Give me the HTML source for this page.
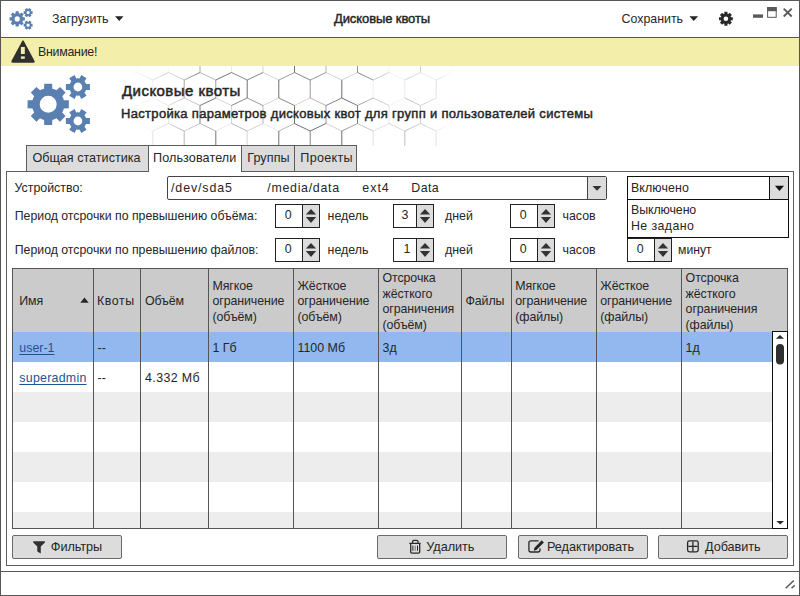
<!DOCTYPE html>
<html><head><meta charset="utf-8"><style>
html,body{margin:0;padding:0;width:800px;height:596px;overflow:hidden;background:#fff}
body{position:relative;font-family:'Liberation Sans', sans-serif;color:#262626}
</style></head><body>
<div style="position:absolute;left:0px;top:0px;width:800px;height:596px;box-sizing:border-box;border:1px solid #565656;background:#fff"></div>
<svg style="position:absolute;left:0;top:0" width="800" height="37">
<path fill="#5a7fb1" fill-rule="evenodd" d="M19.46,13.45L18.77,13.21L18.75,11.26L15.65,11.26L15.63,13.21L14.94,13.45L14.29,13.77L12.89,12.40L10.70,14.59L12.07,15.99L11.75,16.64L11.51,17.33L9.56,17.35L9.56,20.45L11.51,20.47L11.75,21.16L12.07,21.81L10.70,23.21L12.89,25.40L14.29,24.03L14.94,24.35L15.63,24.59L15.65,26.54L18.75,26.54L18.77,24.59L19.46,24.35L20.11,24.03L21.51,25.40L23.70,23.21L22.33,21.81L22.65,21.16L22.89,20.47L24.84,20.45L24.84,17.35L22.89,17.33L22.65,16.64L22.33,15.99L23.70,14.59L21.51,12.40L20.11,13.77ZM19.80,18.90A2.6,2.6 0 1,0 14.60,18.90A2.6,2.6 0 1,0 19.80,18.90Z"/>
<path fill="#5a7fb1" fill-rule="evenodd" d="M30.96,14.25L31.10,13.98L32.56,14.08L32.56,11.12L31.10,11.22L30.96,10.95L30.79,10.70L31.61,9.48L29.05,8.00L28.40,9.31L28.10,9.30L27.80,9.31L27.15,8.00L24.59,9.48L25.41,10.70L25.24,10.95L25.10,11.22L23.64,11.12L23.64,14.08L25.10,13.98L25.24,14.25L25.41,14.50L24.59,15.72L27.15,17.20L27.80,15.89L28.10,15.90L28.40,15.89L29.05,17.20L31.61,15.72L30.79,14.50ZM29.70,12.60A1.6,1.6 0 1,0 26.50,12.60A1.6,1.6 0 1,0 29.70,12.60Z"/>
<path fill="#5a7fb1" fill-rule="evenodd" d="M30.96,26.85L31.10,26.58L32.56,26.68L32.56,23.72L31.10,23.82L30.96,23.55L30.79,23.30L31.61,22.08L29.05,20.60L28.40,21.91L28.10,21.90L27.80,21.91L27.15,20.60L24.59,22.08L25.41,23.30L25.24,23.55L25.10,23.82L23.64,23.72L23.64,26.68L25.10,26.58L25.24,26.85L25.41,27.10L24.59,28.32L27.15,29.80L27.80,28.49L28.10,28.50L28.40,28.49L29.05,29.80L31.61,28.32L30.79,27.10ZM29.70,25.20A1.6,1.6 0 1,0 26.50,25.20A1.6,1.6 0 1,0 29.70,25.20Z"/>
<path fill="#262626" d="M115,16.3 L123.5,16.3 L119.25,21 Z"/>
<path fill="#262626" d="M689.4,16.3 L698.1,16.3 L693.75,21 Z"/>
<path fill="#2a2a2a" fill-rule="evenodd" d="M727.93,13.85L727.45,13.68L727.45,11.82L724.35,11.82L724.35,13.68L723.87,13.85L723.41,14.07L722.10,12.75L719.90,14.95L721.22,16.26L721.00,16.72L720.83,17.20L718.97,17.20L718.97,20.30L720.83,20.30L721.00,20.78L721.22,21.24L719.90,22.55L722.10,24.75L723.41,23.43L723.87,23.65L724.35,23.82L724.35,25.68L727.45,25.68L727.45,23.82L727.93,23.65L728.39,23.43L729.70,24.75L731.90,22.55L730.58,21.24L730.80,20.78L730.97,20.30L732.83,20.30L732.83,17.20L730.97,17.20L730.80,16.72L730.58,16.26L731.90,14.95L729.70,12.75L728.39,14.07ZM728.20,18.75A2.3,2.3 0 1,0 723.60,18.75A2.3,2.3 0 1,0 728.20,18.75Z"/>
<rect x="753" y="14.4" width="10" height="3.4" fill="#5a5a5a"/>
<rect x="767.6" y="7.6" width="8.6" height="9.7" fill="none" stroke="#5a5a5a" stroke-width="1"/>
<rect x="767.1" y="7.1" width="9.6" height="4.1" fill="#5a5a5a"/>
<path d="M783.7,8.7 L791.7,16.5 M791.7,8.7 L783.7,16.5" stroke="#5a5a5a" stroke-width="1.85"/>
</svg>
<div style="position:absolute;left:52px;top:8.5px;font-size:12.4px;line-height:20px;font-weight:normal;color:#262626;letter-spacing:0px;white-space:pre;">Загрузить</div>
<div style="position:absolute;left:334px;top:9px;font-size:13px;line-height:20px;font-weight:normal;color:#262626;letter-spacing:-0.1px;white-space:pre;-webkit-text-stroke:0.45px #262626">Дисковые квоты</div>
<div style="position:absolute;left:621.5px;top:8.5px;font-size:12.4px;line-height:20px;font-weight:normal;color:#262626;letter-spacing:0px;white-space:pre;">Сохранить</div>
<div style="position:absolute;left:0px;top:37px;width:800px;height:1px;box-sizing:border-box;background:#565656"></div>
<div style="position:absolute;left:1px;top:38px;width:798px;height:28px;box-sizing:border-box;background:#f3eea9"></div>
<svg style="position:absolute;left:0;top:38px" width="60" height="28">
<path d="M23,3.2 L33.6,23 Q34.5,24 33.2,24 L12.8,24 Q11.5,24 12.4,23 Z" fill="#303030" stroke="#303030" stroke-width="1.6" stroke-linejoin="round"/>
<rect x="20.9" y="9" width="3.9" height="7" fill="#f3eea9"/>
<rect x="20.9" y="18.4" width="3.9" height="2.4" fill="#f3eea9"/>
</svg>
<div style="position:absolute;left:37.9px;top:41.5px;font-size:12.4px;line-height:20px;font-weight:normal;color:#262626;letter-spacing:-0.25px;white-space:pre;">Внимание!</div>
<svg style="position:absolute;left:0;top:66px" width="800" height="80" viewBox="0 66 800 80">
<defs>
<linearGradient id="fg" gradientUnits="userSpaceOnUse" x1="0" x2="800" y1="0" y2="0">
<stop offset="0.1625" stop-color="#fff" stop-opacity="0"/>
<stop offset="0.2125" stop-color="#fff" stop-opacity="0.3"/>
<stop offset="0.256" stop-color="#fff" stop-opacity="0.85"/>
<stop offset="0.43" stop-color="#fff" stop-opacity="0.9"/>
<stop offset="0.4875" stop-color="#fff" stop-opacity="0.5"/>
<stop offset="0.55" stop-color="#fff" stop-opacity="0.15"/>
<stop offset="0.57" stop-color="#fff" stop-opacity="0"/>
</linearGradient>
<mask id="m"><rect x="0" y="66" width="800" height="80" fill="url(#fg)"/></mask>
</defs>
<g fill="none" stroke="#333" stroke-width="0.8" mask="url(#m)"><path d="M58.2,29.0L58.2,47.0" stroke-opacity="0.85"/><path d="M58.2,29.0L74.0,21.5" stroke-opacity="1"/><path d="M58.2,47.0L74.0,54.5" stroke-opacity="0.7"/><path d="M58.2,80.0L58.2,98.0" stroke-opacity="0.3"/><path d="M58.2,80.0L74.0,72.5" stroke-opacity="1"/><path d="M58.2,98.0L74.0,105.5" stroke-opacity="1"/><path d="M58.2,131.0L58.2,149.0" stroke-opacity="0.15"/><path d="M58.2,131.0L74.0,123.5" stroke-opacity="0.5"/><path d="M58.2,149.0L74.0,156.5" stroke-opacity="1"/><path d="M74.0,21.5L89.8,29.0" stroke-opacity="0.85"/><path d="M74.0,54.5L74.0,72.5" stroke-opacity="0.5"/><path d="M74.0,54.5L89.8,47.0" stroke-opacity="1"/><path d="M74.0,72.5L89.8,80.0" stroke-opacity="0.5"/><path d="M74.0,105.5L74.0,123.5" stroke-opacity="1"/><path d="M74.0,105.5L89.8,98.0" stroke-opacity="1"/><path d="M74.0,123.5L89.8,131.0" stroke-opacity="1"/><path d="M74.0,156.5L74.0,174.5" stroke-opacity="0.7"/><path d="M74.0,156.5L89.8,149.0" stroke-opacity="0.7"/><path d="M74.0,174.5L89.8,182.0" stroke-opacity="1"/><path d="M89.8,29.0L89.8,47.0" stroke-opacity="1"/><path d="M89.8,29.0L105.5,21.5" stroke-opacity="1"/><path d="M89.8,47.0L105.5,54.5" stroke-opacity="0.5"/><path d="M89.8,80.0L89.8,98.0" stroke-opacity="0.7"/><path d="M89.8,80.0L105.5,72.5" stroke-opacity="1"/><path d="M89.8,98.0L105.5,105.5" stroke-opacity="0.15"/><path d="M89.8,131.0L89.8,149.0" stroke-opacity="0.5"/><path d="M89.8,131.0L105.5,123.5" stroke-opacity="1"/><path d="M89.8,149.0L105.5,156.5" stroke-opacity="1"/><path d="M89.8,182.0L105.5,174.5" stroke-opacity="0.3"/><path d="M105.5,21.5L121.2,29.0" stroke-opacity="0.3"/><path d="M105.5,54.5L105.5,72.5" stroke-opacity="0.5"/><path d="M105.5,54.5L121.2,47.0" stroke-opacity="1"/><path d="M105.5,72.5L121.2,80.0" stroke-opacity="0.5"/><path d="M105.5,105.5L105.5,123.5" stroke-opacity="0.5"/><path d="M105.5,105.5L121.2,98.0" stroke-opacity="0.7"/><path d="M105.5,123.5L121.2,131.0" stroke-opacity="1"/><path d="M105.5,156.5L105.5,174.5" stroke-opacity="1"/><path d="M105.5,156.5L121.2,149.0" stroke-opacity="1"/><path d="M105.5,174.5L121.2,182.0" stroke-opacity="0.5"/><path d="M121.2,29.0L121.2,47.0" stroke-opacity="0.15"/><path d="M121.2,29.0L137.0,21.5" stroke-opacity="1"/><path d="M121.2,47.0L137.0,54.5" stroke-opacity="0.85"/><path d="M121.2,80.0L121.2,98.0" stroke-opacity="0.7"/><path d="M121.2,80.0L137.0,72.5" stroke-opacity="1"/><path d="M121.2,98.0L137.0,105.5" stroke-opacity="0.5"/><path d="M121.2,131.0L121.2,149.0" stroke-opacity="1"/><path d="M121.2,131.0L137.0,123.5" stroke-opacity="0.5"/><path d="M121.2,149.0L137.0,156.5" stroke-opacity="0.85"/><path d="M121.2,182.0L137.0,174.5" stroke-opacity="0.5"/><path d="M137.0,21.5L152.8,29.0" stroke-opacity="0.15"/><path d="M137.0,54.5L137.0,72.5" stroke-opacity="0.3"/><path d="M137.0,54.5L152.8,47.0" stroke-opacity="1"/><path d="M137.0,72.5L152.8,80.0" stroke-opacity="1"/><path d="M137.0,105.5L137.0,123.5" stroke-opacity="0.5"/><path d="M137.0,105.5L152.8,98.0" stroke-opacity="0.5"/><path d="M137.0,123.5L152.8,131.0" stroke-opacity="0.3"/><path d="M137.0,156.5L137.0,174.5" stroke-opacity="1"/><path d="M137.0,156.5L152.8,149.0" stroke-opacity="0.85"/><path d="M137.0,174.5L152.8,182.0" stroke-opacity="1"/><path d="M152.8,29.0L152.8,47.0" stroke-opacity="0.5"/><path d="M152.8,29.0L168.5,21.5" stroke-opacity="0.3"/><path d="M152.8,47.0L168.5,54.5" stroke-opacity="1"/><path d="M152.8,80.0L152.8,98.0" stroke-opacity="0.5"/><path d="M152.8,80.0L168.5,72.5" stroke-opacity="1"/><path d="M152.8,98.0L168.5,105.5" stroke-opacity="0.5"/><path d="M152.8,131.0L152.8,149.0" stroke-opacity="1"/><path d="M152.8,131.0L168.5,123.5" stroke-opacity="0.7"/><path d="M152.8,149.0L168.5,156.5" stroke-opacity="0.3"/><path d="M152.8,182.0L168.5,174.5" stroke-opacity="0.5"/><path d="M168.5,21.5L184.2,29.0" stroke-opacity="0.7"/><path d="M168.5,54.5L168.5,72.5" stroke-opacity="0.15"/><path d="M168.5,54.5L184.2,47.0" stroke-opacity="0.85"/><path d="M168.5,72.5L184.2,80.0" stroke-opacity="0.7"/><path d="M168.5,105.5L168.5,123.5" stroke-opacity="0.5"/><path d="M168.5,105.5L184.2,98.0" stroke-opacity="0.7"/><path d="M168.5,123.5L184.2,131.0" stroke-opacity="0.85"/><path d="M168.5,156.5L168.5,174.5" stroke-opacity="0.85"/><path d="M168.5,156.5L184.2,149.0" stroke-opacity="1"/><path d="M168.5,174.5L184.2,182.0" stroke-opacity="0.15"/><path d="M184.2,29.0L184.2,47.0" stroke-opacity="1"/><path d="M184.2,29.0L200.0,21.5" stroke-opacity="0.3"/><path d="M184.2,47.0L200.0,54.5" stroke-opacity="0.15"/><path d="M184.2,80.0L184.2,98.0" stroke-opacity="1"/><path d="M184.2,80.0L200.0,72.5" stroke-opacity="1"/><path d="M184.2,98.0L200.0,105.5" stroke-opacity="0.5"/><path d="M184.2,131.0L184.2,149.0" stroke-opacity="0.85"/><path d="M184.2,131.0L200.0,123.5" stroke-opacity="0.5"/><path d="M184.2,149.0L200.0,156.5" stroke-opacity="0.7"/><path d="M184.2,182.0L200.0,174.5" stroke-opacity="0.85"/><path d="M200.0,21.5L215.8,29.0" stroke-opacity="0.3"/><path d="M200.0,54.5L200.0,72.5" stroke-opacity="0.7"/><path d="M200.0,54.5L215.8,47.0" stroke-opacity="0.85"/><path d="M200.0,72.5L215.8,80.0" stroke-opacity="0.5"/><path d="M200.0,105.5L200.0,123.5" stroke-opacity="1"/><path d="M200.0,105.5L215.8,98.0" stroke-opacity="1"/><path d="M200.0,123.5L215.8,131.0" stroke-opacity="0.5"/><path d="M200.0,156.5L200.0,174.5" stroke-opacity="0.7"/><path d="M200.0,156.5L215.8,149.0" stroke-opacity="1"/><path d="M200.0,174.5L215.8,182.0" stroke-opacity="0.15"/><path d="M215.8,29.0L215.8,47.0" stroke-opacity="0.85"/><path d="M215.8,29.0L231.5,21.5" stroke-opacity="1"/><path d="M215.8,47.0L231.5,54.5" stroke-opacity="0.7"/><path d="M215.8,80.0L215.8,98.0" stroke-opacity="0.7"/><path d="M215.8,80.0L231.5,72.5" stroke-opacity="1"/><path d="M215.8,98.0L231.5,105.5" stroke-opacity="0.3"/><path d="M215.8,131.0L215.8,149.0" stroke-opacity="1"/><path d="M215.8,131.0L231.5,123.5" stroke-opacity="0.15"/><path d="M215.8,149.0L231.5,156.5" stroke-opacity="0.5"/><path d="M215.8,182.0L231.5,174.5" stroke-opacity="0.5"/><path d="M231.5,21.5L247.2,29.0" stroke-opacity="0.15"/><path d="M231.5,54.5L231.5,72.5" stroke-opacity="0.15"/><path d="M231.5,54.5L247.2,47.0" stroke-opacity="0.85"/><path d="M231.5,72.5L247.2,80.0" stroke-opacity="0.85"/><path d="M231.5,105.5L231.5,123.5" stroke-opacity="0.3"/><path d="M231.5,105.5L247.2,98.0" stroke-opacity="0.85"/><path d="M231.5,123.5L247.2,131.0" stroke-opacity="0.5"/><path d="M231.5,156.5L231.5,174.5" stroke-opacity="0.7"/><path d="M231.5,156.5L247.2,149.0" stroke-opacity="0.5"/><path d="M231.5,174.5L247.2,182.0" stroke-opacity="0.15"/><path d="M247.2,29.0L247.2,47.0" stroke-opacity="0.7"/><path d="M247.2,29.0L263.0,21.5" stroke-opacity="1"/><path d="M247.2,47.0L263.0,54.5" stroke-opacity="0.15"/><path d="M247.2,80.0L247.2,98.0" stroke-opacity="1"/><path d="M247.2,80.0L263.0,72.5" stroke-opacity="0.85"/><path d="M247.2,98.0L263.0,105.5" stroke-opacity="0.7"/><path d="M247.2,131.0L247.2,149.0" stroke-opacity="0.3"/><path d="M247.2,131.0L263.0,123.5" stroke-opacity="0.3"/><path d="M247.2,149.0L263.0,156.5" stroke-opacity="1"/><path d="M247.2,182.0L263.0,174.5" stroke-opacity="1"/><path d="M263.0,21.5L278.8,29.0" stroke-opacity="0.3"/><path d="M263.0,54.5L263.0,72.5" stroke-opacity="0.3"/><path d="M263.0,54.5L278.8,47.0" stroke-opacity="0.85"/><path d="M263.0,72.5L278.8,80.0" stroke-opacity="0.3"/><path d="M263.0,105.5L263.0,123.5" stroke-opacity="0.5"/><path d="M263.0,105.5L278.8,98.0" stroke-opacity="0.3"/><path d="M263.0,123.5L278.8,131.0" stroke-opacity="0.15"/><path d="M263.0,156.5L263.0,174.5" stroke-opacity="0.7"/><path d="M263.0,156.5L278.8,149.0" stroke-opacity="0.85"/><path d="M263.0,174.5L278.8,182.0" stroke-opacity="0.3"/><path d="M278.8,29.0L278.8,47.0" stroke-opacity="0.7"/><path d="M278.8,29.0L294.5,21.5" stroke-opacity="0.3"/><path d="M278.8,47.0L294.5,54.5" stroke-opacity="0.85"/><path d="M278.8,80.0L278.8,98.0" stroke-opacity="1"/><path d="M278.8,80.0L294.5,72.5" stroke-opacity="0.7"/><path d="M278.8,98.0L294.5,105.5" stroke-opacity="0.85"/><path d="M278.8,131.0L278.8,149.0" stroke-opacity="1"/><path d="M278.8,131.0L294.5,123.5" stroke-opacity="0.5"/><path d="M278.8,149.0L294.5,156.5" stroke-opacity="1"/><path d="M278.8,182.0L294.5,174.5" stroke-opacity="0.7"/><path d="M294.5,21.5L310.2,29.0" stroke-opacity="1"/><path d="M294.5,54.5L294.5,72.5" stroke-opacity="1"/><path d="M294.5,54.5L310.2,47.0" stroke-opacity="0.15"/><path d="M294.5,72.5L310.2,80.0" stroke-opacity="0.85"/><path d="M294.5,105.5L294.5,123.5" stroke-opacity="1"/><path d="M294.5,105.5L310.2,98.0" stroke-opacity="0.3"/><path d="M294.5,123.5L310.2,131.0" stroke-opacity="1"/><path d="M294.5,156.5L294.5,174.5" stroke-opacity="0.7"/><path d="M294.5,156.5L310.2,149.0" stroke-opacity="0.7"/><path d="M294.5,174.5L310.2,182.0" stroke-opacity="0.15"/><path d="M310.2,29.0L310.2,47.0" stroke-opacity="0.7"/><path d="M310.2,29.0L326.0,21.5" stroke-opacity="1"/><path d="M310.2,47.0L326.0,54.5" stroke-opacity="1"/><path d="M310.2,80.0L310.2,98.0" stroke-opacity="0.7"/><path d="M310.2,80.0L326.0,72.5" stroke-opacity="0.7"/><path d="M310.2,98.0L326.0,105.5" stroke-opacity="0.5"/><path d="M310.2,131.0L310.2,149.0" stroke-opacity="0.85"/><path d="M310.2,131.0L326.0,123.5" stroke-opacity="1"/><path d="M310.2,149.0L326.0,156.5" stroke-opacity="0.15"/><path d="M310.2,182.0L326.0,174.5" stroke-opacity="0.7"/><path d="M326.0,21.5L341.8,29.0" stroke-opacity="0.15"/><path d="M326.0,54.5L326.0,72.5" stroke-opacity="0.5"/><path d="M326.0,54.5L341.8,47.0" stroke-opacity="0.85"/><path d="M326.0,72.5L341.8,80.0" stroke-opacity="0.3"/><path d="M326.0,105.5L326.0,123.5" stroke-opacity="0.7"/><path d="M326.0,105.5L341.8,98.0" stroke-opacity="0.85"/><path d="M326.0,123.5L341.8,131.0" stroke-opacity="0.3"/><path d="M326.0,156.5L326.0,174.5" stroke-opacity="0.7"/><path d="M326.0,156.5L341.8,149.0" stroke-opacity="1"/><path d="M326.0,174.5L341.8,182.0" stroke-opacity="1"/><path d="M341.8,29.0L341.8,47.0" stroke-opacity="1"/><path d="M341.8,29.0L357.5,21.5" stroke-opacity="1"/><path d="M341.8,47.0L357.5,54.5" stroke-opacity="1"/><path d="M341.8,80.0L341.8,98.0" stroke-opacity="1"/><path d="M341.8,80.0L357.5,72.5" stroke-opacity="0.3"/><path d="M341.8,98.0L357.5,105.5" stroke-opacity="1"/><path d="M341.8,131.0L341.8,149.0" stroke-opacity="1"/><path d="M341.8,131.0L357.5,123.5" stroke-opacity="0.7"/><path d="M341.8,149.0L357.5,156.5" stroke-opacity="0.15"/><path d="M341.8,182.0L357.5,174.5" stroke-opacity="0.5"/><path d="M357.5,21.5L373.2,29.0" stroke-opacity="1"/><path d="M357.5,54.5L357.5,72.5" stroke-opacity="0.85"/><path d="M357.5,54.5L373.2,47.0" stroke-opacity="0.85"/><path d="M357.5,72.5L373.2,80.0" stroke-opacity="1"/><path d="M357.5,105.5L357.5,123.5" stroke-opacity="1"/><path d="M357.5,105.5L373.2,98.0" stroke-opacity="0.7"/><path d="M357.5,123.5L373.2,131.0" stroke-opacity="0.5"/><path d="M357.5,156.5L357.5,174.5" stroke-opacity="0.85"/><path d="M357.5,156.5L373.2,149.0" stroke-opacity="0.5"/><path d="M357.5,174.5L373.2,182.0" stroke-opacity="0.5"/><path d="M373.2,29.0L373.2,47.0" stroke-opacity="0.85"/><path d="M373.2,29.0L389.0,21.5" stroke-opacity="1"/><path d="M373.2,47.0L389.0,54.5" stroke-opacity="0.3"/><path d="M373.2,80.0L373.2,98.0" stroke-opacity="0.15"/><path d="M373.2,80.0L389.0,72.5" stroke-opacity="0.5"/><path d="M373.2,98.0L389.0,105.5" stroke-opacity="0.5"/><path d="M373.2,131.0L373.2,149.0" stroke-opacity="0.3"/><path d="M373.2,131.0L389.0,123.5" stroke-opacity="0.3"/><path d="M373.2,149.0L389.0,156.5" stroke-opacity="0.3"/><path d="M373.2,182.0L389.0,174.5" stroke-opacity="1"/><path d="M389.0,21.5L404.8,29.0" stroke-opacity="0.7"/><path d="M389.0,54.5L389.0,72.5" stroke-opacity="0.15"/><path d="M389.0,54.5L404.8,47.0" stroke-opacity="0.15"/><path d="M389.0,72.5L404.8,80.0" stroke-opacity="0.15"/><path d="M389.0,105.5L389.0,123.5" stroke-opacity="0.3"/><path d="M389.0,105.5L404.8,98.0" stroke-opacity="0.15"/><path d="M389.0,123.5L404.8,131.0" stroke-opacity="0.5"/><path d="M389.0,156.5L389.0,174.5" stroke-opacity="0.7"/><path d="M389.0,156.5L404.8,149.0" stroke-opacity="0.7"/><path d="M389.0,174.5L404.8,182.0" stroke-opacity="0.7"/><path d="M404.8,29.0L404.8,47.0" stroke-opacity="0.7"/><path d="M404.8,29.0L420.5,21.5" stroke-opacity="1"/><path d="M404.8,47.0L420.5,54.5" stroke-opacity="0.7"/><path d="M404.8,80.0L404.8,98.0" stroke-opacity="0.3"/><path d="M404.8,80.0L420.5,72.5" stroke-opacity="0.7"/><path d="M404.8,98.0L420.5,105.5" stroke-opacity="1"/><path d="M404.8,131.0L404.8,149.0" stroke-opacity="1"/><path d="M404.8,131.0L420.5,123.5" stroke-opacity="1"/><path d="M404.8,149.0L420.5,156.5" stroke-opacity="1"/><path d="M404.8,182.0L420.5,174.5" stroke-opacity="0.7"/><path d="M420.5,21.5L436.2,29.0" stroke-opacity="1"/><path d="M420.5,54.5L420.5,72.5" stroke-opacity="1"/><path d="M420.5,54.5L436.2,47.0" stroke-opacity="0.85"/><path d="M420.5,72.5L436.2,80.0" stroke-opacity="0.5"/><path d="M420.5,105.5L420.5,123.5" stroke-opacity="1"/><path d="M420.5,105.5L436.2,98.0" stroke-opacity="1"/><path d="M420.5,123.5L436.2,131.0" stroke-opacity="1"/><path d="M420.5,156.5L420.5,174.5" stroke-opacity="0.5"/><path d="M420.5,156.5L436.2,149.0" stroke-opacity="1"/><path d="M420.5,174.5L436.2,182.0" stroke-opacity="0.5"/><path d="M436.2,29.0L436.2,47.0" stroke-opacity="1"/><path d="M436.2,29.0L452.0,21.5" stroke-opacity="0.85"/><path d="M436.2,47.0L452.0,54.5" stroke-opacity="0.5"/><path d="M436.2,80.0L436.2,98.0" stroke-opacity="1"/><path d="M436.2,80.0L452.0,72.5" stroke-opacity="1"/><path d="M436.2,98.0L452.0,105.5" stroke-opacity="0.15"/><path d="M436.2,131.0L436.2,149.0" stroke-opacity="1"/><path d="M436.2,131.0L452.0,123.5" stroke-opacity="0.5"/><path d="M436.2,149.0L452.0,156.5" stroke-opacity="0.7"/><path d="M436.2,182.0L452.0,174.5" stroke-opacity="1"/><path d="M452.0,21.5L467.8,29.0" stroke-opacity="0.3"/><path d="M452.0,54.5L452.0,72.5" stroke-opacity="0.85"/><path d="M452.0,54.5L467.8,47.0" stroke-opacity="0.85"/><path d="M452.0,72.5L467.8,80.0" stroke-opacity="0.5"/><path d="M452.0,105.5L452.0,123.5" stroke-opacity="0.85"/><path d="M452.0,105.5L467.8,98.0" stroke-opacity="0.7"/><path d="M452.0,123.5L467.8,131.0" stroke-opacity="1"/><path d="M452.0,156.5L452.0,174.5" stroke-opacity="1"/><path d="M452.0,156.5L467.8,149.0" stroke-opacity="0.15"/><path d="M452.0,174.5L467.8,182.0" stroke-opacity="0.7"/><path d="M467.8,29.0L467.8,47.0" stroke-opacity="0.7"/><path d="M467.8,29.0L483.5,21.5" stroke-opacity="0.7"/><path d="M467.8,47.0L483.5,54.5" stroke-opacity="0.7"/><path d="M467.8,80.0L467.8,98.0" stroke-opacity="0.85"/><path d="M467.8,80.0L483.5,72.5" stroke-opacity="1"/><path d="M467.8,98.0L483.5,105.5" stroke-opacity="1"/><path d="M467.8,131.0L467.8,149.0" stroke-opacity="1"/><path d="M467.8,131.0L483.5,123.5" stroke-opacity="0.3"/><path d="M467.8,149.0L483.5,156.5" stroke-opacity="0.85"/><path d="M467.8,182.0L483.5,174.5" stroke-opacity="0.3"/><path d="M483.5,21.5L499.2,29.0" stroke-opacity="0.85"/><path d="M483.5,54.5L483.5,72.5" stroke-opacity="0.7"/><path d="M483.5,54.5L499.2,47.0" stroke-opacity="0.15"/><path d="M483.5,72.5L499.2,80.0" stroke-opacity="0.3"/><path d="M483.5,105.5L483.5,123.5" stroke-opacity="1"/><path d="M483.5,105.5L499.2,98.0" stroke-opacity="0.5"/><path d="M483.5,123.5L499.2,131.0" stroke-opacity="1"/><path d="M483.5,156.5L483.5,174.5" stroke-opacity="1"/><path d="M483.5,156.5L499.2,149.0" stroke-opacity="0.5"/><path d="M483.5,174.5L499.2,182.0" stroke-opacity="0.85"/><path d="M499.2,29.0L499.2,47.0" stroke-opacity="1"/><path d="M499.2,29.0L515.0,21.5" stroke-opacity="0.3"/><path d="M499.2,47.0L515.0,54.5" stroke-opacity="0.5"/><path d="M499.2,80.0L499.2,98.0" stroke-opacity="1"/><path d="M499.2,80.0L515.0,72.5" stroke-opacity="0.15"/><path d="M499.2,98.0L515.0,105.5" stroke-opacity="0.5"/><path d="M499.2,131.0L499.2,149.0" stroke-opacity="0.85"/><path d="M499.2,131.0L515.0,123.5" stroke-opacity="0.3"/><path d="M499.2,149.0L515.0,156.5" stroke-opacity="0.15"/><path d="M499.2,182.0L515.0,174.5" stroke-opacity="1"/><path d="M515.0,21.5L530.8,29.0" stroke-opacity="0.3"/><path d="M515.0,54.5L515.0,72.5" stroke-opacity="0.15"/><path d="M515.0,54.5L530.8,47.0" stroke-opacity="0.85"/><path d="M515.0,72.5L530.8,80.0" stroke-opacity="0.5"/><path d="M515.0,105.5L515.0,123.5" stroke-opacity="0.85"/><path d="M515.0,105.5L530.8,98.0" stroke-opacity="1"/><path d="M515.0,123.5L530.8,131.0" stroke-opacity="0.85"/><path d="M515.0,156.5L515.0,174.5" stroke-opacity="0.15"/><path d="M515.0,156.5L530.8,149.0" stroke-opacity="1"/><path d="M515.0,174.5L530.8,182.0" stroke-opacity="0.5"/><path d="M530.8,29.0L530.8,47.0" stroke-opacity="0.5"/><path d="M530.8,29.0L546.5,21.5" stroke-opacity="0.15"/><path d="M530.8,47.0L546.5,54.5" stroke-opacity="0.5"/><path d="M530.8,80.0L530.8,98.0" stroke-opacity="0.85"/><path d="M530.8,80.0L546.5,72.5" stroke-opacity="0.3"/><path d="M530.8,98.0L546.5,105.5" stroke-opacity="1"/><path d="M530.8,131.0L530.8,149.0" stroke-opacity="0.5"/><path d="M530.8,131.0L546.5,123.5" stroke-opacity="0.15"/><path d="M530.8,149.0L546.5,156.5" stroke-opacity="0.15"/><path d="M530.8,182.0L546.5,174.5" stroke-opacity="0.15"/><path d="M546.5,21.5L562.2,29.0" stroke-opacity="0.15"/><path d="M546.5,54.5L546.5,72.5" stroke-opacity="1"/><path d="M546.5,54.5L562.2,47.0" stroke-opacity="0.15"/><path d="M546.5,72.5L562.2,80.0" stroke-opacity="1"/><path d="M546.5,105.5L546.5,123.5" stroke-opacity="0.15"/><path d="M546.5,105.5L562.2,98.0" stroke-opacity="0.7"/><path d="M546.5,123.5L562.2,131.0" stroke-opacity="0.3"/><path d="M546.5,156.5L546.5,174.5" stroke-opacity="0.15"/><path d="M546.5,156.5L562.2,149.0" stroke-opacity="1"/><path d="M546.5,174.5L562.2,182.0" stroke-opacity="1"/><path d="M562.2,29.0L562.2,47.0" stroke-opacity="0.5"/><path d="M562.2,29.0L578.0,21.5" stroke-opacity="0.7"/><path d="M562.2,47.0L578.0,54.5" stroke-opacity="0.85"/><path d="M562.2,80.0L562.2,98.0" stroke-opacity="0.3"/><path d="M562.2,80.0L578.0,72.5" stroke-opacity="1"/><path d="M562.2,98.0L578.0,105.5" stroke-opacity="1"/><path d="M562.2,131.0L562.2,149.0" stroke-opacity="0.15"/><path d="M562.2,131.0L578.0,123.5" stroke-opacity="0.85"/><path d="M562.2,149.0L578.0,156.5" stroke-opacity="0.7"/><path d="M562.2,182.0L578.0,174.5" stroke-opacity="0.85"/><path d="M578.0,21.5L593.8,29.0" stroke-opacity="1"/><path d="M578.0,54.5L578.0,72.5" stroke-opacity="0.3"/><path d="M578.0,54.5L593.8,47.0" stroke-opacity="0.5"/><path d="M578.0,72.5L593.8,80.0" stroke-opacity="0.85"/><path d="M578.0,105.5L578.0,123.5" stroke-opacity="0.7"/><path d="M578.0,105.5L593.8,98.0" stroke-opacity="0.15"/><path d="M578.0,123.5L593.8,131.0" stroke-opacity="0.3"/><path d="M578.0,156.5L578.0,174.5" stroke-opacity="0.85"/><path d="M578.0,156.5L593.8,149.0" stroke-opacity="0.85"/><path d="M578.0,174.5L593.8,182.0" stroke-opacity="1"/><path d="M593.8,29.0L593.8,47.0" stroke-opacity="1"/><path d="M593.8,29.0L609.5,21.5" stroke-opacity="1"/><path d="M593.8,47.0L609.5,54.5" stroke-opacity="1"/><path d="M593.8,80.0L593.8,98.0" stroke-opacity="0.7"/><path d="M593.8,80.0L609.5,72.5" stroke-opacity="1"/><path d="M593.8,98.0L609.5,105.5" stroke-opacity="0.85"/><path d="M593.8,131.0L593.8,149.0" stroke-opacity="1"/><path d="M593.8,131.0L609.5,123.5" stroke-opacity="0.7"/><path d="M593.8,149.0L609.5,156.5" stroke-opacity="0.5"/><path d="M593.8,182.0L609.5,174.5" stroke-opacity="0.5"/><path d="M609.5,21.5L625.2,29.0" stroke-opacity="0.15"/><path d="M609.5,54.5L609.5,72.5" stroke-opacity="1"/><path d="M609.5,54.5L625.2,47.0" stroke-opacity="0.7"/><path d="M609.5,72.5L625.2,80.0" stroke-opacity="0.3"/><path d="M609.5,105.5L609.5,123.5" stroke-opacity="0.85"/><path d="M609.5,105.5L625.2,98.0" stroke-opacity="0.15"/><path d="M609.5,123.5L625.2,131.0" stroke-opacity="0.3"/><path d="M609.5,156.5L609.5,174.5" stroke-opacity="1"/><path d="M609.5,156.5L625.2,149.0" stroke-opacity="0.15"/><path d="M609.5,174.5L625.2,182.0" stroke-opacity="0.3"/><path d="M625.2,29.0L625.2,47.0" stroke-opacity="1"/><path d="M625.2,29.0L641.0,21.5" stroke-opacity="0.7"/><path d="M625.2,47.0L641.0,54.5" stroke-opacity="0.15"/><path d="M625.2,80.0L625.2,98.0" stroke-opacity="0.3"/><path d="M625.2,80.0L641.0,72.5" stroke-opacity="0.15"/><path d="M625.2,98.0L641.0,105.5" stroke-opacity="1"/><path d="M625.2,131.0L625.2,149.0" stroke-opacity="0.7"/><path d="M625.2,131.0L641.0,123.5" stroke-opacity="1"/><path d="M625.2,149.0L641.0,156.5" stroke-opacity="0.7"/><path d="M625.2,182.0L641.0,174.5" stroke-opacity="0.15"/><path d="M641.0,21.5L656.8,29.0" stroke-opacity="0.3"/><path d="M641.0,54.5L641.0,72.5" stroke-opacity="0.85"/><path d="M641.0,54.5L656.8,47.0" stroke-opacity="1"/><path d="M641.0,72.5L656.8,80.0" stroke-opacity="0.15"/><path d="M641.0,105.5L641.0,123.5" stroke-opacity="0.3"/><path d="M641.0,105.5L656.8,98.0" stroke-opacity="0.7"/><path d="M641.0,123.5L656.8,131.0" stroke-opacity="0.7"/><path d="M641.0,156.5L641.0,174.5" stroke-opacity="0.7"/><path d="M641.0,156.5L656.8,149.0" stroke-opacity="0.3"/><path d="M641.0,174.5L656.8,182.0" stroke-opacity="1"/><path d="M656.8,29.0L656.8,47.0" stroke-opacity="0.3"/><path d="M656.8,29.0L672.5,21.5" stroke-opacity="1"/><path d="M656.8,47.0L672.5,54.5" stroke-opacity="1"/><path d="M656.8,80.0L656.8,98.0" stroke-opacity="1"/><path d="M656.8,80.0L672.5,72.5" stroke-opacity="1"/><path d="M656.8,98.0L672.5,105.5" stroke-opacity="1"/><path d="M656.8,131.0L656.8,149.0" stroke-opacity="0.5"/><path d="M656.8,131.0L672.5,123.5" stroke-opacity="0.7"/><path d="M656.8,149.0L672.5,156.5" stroke-opacity="0.15"/><path d="M656.8,182.0L672.5,174.5" stroke-opacity="0.3"/><path d="M672.5,21.5L688.2,29.0" stroke-opacity="1"/><path d="M672.5,54.5L672.5,72.5" stroke-opacity="0.5"/><path d="M672.5,54.5L688.2,47.0" stroke-opacity="0.15"/><path d="M672.5,72.5L688.2,80.0" stroke-opacity="0.5"/><path d="M672.5,105.5L672.5,123.5" stroke-opacity="0.7"/><path d="M672.5,105.5L688.2,98.0" stroke-opacity="0.3"/><path d="M672.5,123.5L688.2,131.0" stroke-opacity="0.85"/><path d="M672.5,156.5L672.5,174.5" stroke-opacity="1"/><path d="M672.5,156.5L688.2,149.0" stroke-opacity="0.5"/><path d="M672.5,174.5L688.2,182.0" stroke-opacity="0.5"/><path d="M688.2,29.0L688.2,47.0" stroke-opacity="1"/><path d="M688.2,29.0L704.0,21.5" stroke-opacity="1"/><path d="M688.2,47.0L704.0,54.5" stroke-opacity="1"/><path d="M688.2,80.0L688.2,98.0" stroke-opacity="0.15"/><path d="M688.2,80.0L704.0,72.5" stroke-opacity="0.3"/><path d="M688.2,98.0L704.0,105.5" stroke-opacity="0.3"/><path d="M688.2,131.0L688.2,149.0" stroke-opacity="1"/><path d="M688.2,131.0L704.0,123.5" stroke-opacity="0.5"/><path d="M688.2,149.0L704.0,156.5" stroke-opacity="0.3"/><path d="M688.2,182.0L704.0,174.5" stroke-opacity="1"/><path d="M704.0,21.5L719.8,29.0" stroke-opacity="0.7"/><path d="M704.0,54.5L704.0,72.5" stroke-opacity="0.15"/><path d="M704.0,54.5L719.8,47.0" stroke-opacity="1"/><path d="M704.0,72.5L719.8,80.0" stroke-opacity="0.15"/><path d="M704.0,105.5L704.0,123.5" stroke-opacity="0.15"/><path d="M704.0,105.5L719.8,98.0" stroke-opacity="1"/><path d="M704.0,123.5L719.8,131.0" stroke-opacity="1"/><path d="M704.0,156.5L704.0,174.5" stroke-opacity="0.85"/><path d="M704.0,156.5L719.8,149.0" stroke-opacity="1"/><path d="M704.0,174.5L719.8,182.0" stroke-opacity="0.85"/><path d="M719.8,29.0L719.8,47.0" stroke-opacity="0.5"/><path d="M719.8,29.0L735.5,21.5" stroke-opacity="1"/><path d="M719.8,47.0L735.5,54.5" stroke-opacity="0.15"/><path d="M719.8,80.0L719.8,98.0" stroke-opacity="0.5"/><path d="M719.8,80.0L735.5,72.5" stroke-opacity="0.85"/><path d="M719.8,98.0L735.5,105.5" stroke-opacity="0.85"/><path d="M719.8,131.0L719.8,149.0" stroke-opacity="0.5"/><path d="M719.8,131.0L735.5,123.5" stroke-opacity="0.7"/><path d="M719.8,149.0L735.5,156.5" stroke-opacity="0.15"/><path d="M719.8,182.0L735.5,174.5" stroke-opacity="1"/><path d="M735.5,21.5L751.2,29.0" stroke-opacity="1"/><path d="M735.5,54.5L735.5,72.5" stroke-opacity="0.3"/><path d="M735.5,54.5L751.2,47.0" stroke-opacity="0.85"/><path d="M735.5,72.5L751.2,80.0" stroke-opacity="0.7"/><path d="M735.5,105.5L735.5,123.5" stroke-opacity="0.3"/><path d="M735.5,105.5L751.2,98.0" stroke-opacity="0.5"/><path d="M735.5,123.5L751.2,131.0" stroke-opacity="0.15"/><path d="M735.5,156.5L735.5,174.5" stroke-opacity="0.5"/><path d="M735.5,156.5L751.2,149.0" stroke-opacity="0.7"/><path d="M735.5,174.5L751.2,182.0" stroke-opacity="0.15"/><path d="M751.2,29.0L751.2,47.0" stroke-opacity="0.5"/><path d="M751.2,47.0L767.0,54.5" stroke-opacity="1"/><path d="M751.2,80.0L751.2,98.0" stroke-opacity="0.5"/><path d="M751.2,80.0L767.0,72.5" stroke-opacity="1"/><path d="M751.2,98.0L767.0,105.5" stroke-opacity="0.5"/><path d="M751.2,131.0L751.2,149.0" stroke-opacity="0.5"/><path d="M751.2,131.0L767.0,123.5" stroke-opacity="1"/><path d="M751.2,149.0L767.0,156.5" stroke-opacity="0.15"/><path d="M751.2,182.0L767.0,174.5" stroke-opacity="0.7"/><path d="M767.0,54.5L767.0,72.5" stroke-opacity="0.15"/><path d="M767.0,105.5L767.0,123.5" stroke-opacity="1"/><path d="M767.0,156.5L767.0,174.5" stroke-opacity="0.5"/></g>
</svg>
<svg style="position:absolute;left:0;top:0" width="100" height="140">
<path fill="#5a7fb1" fill-rule="evenodd" d="M54.40,89.33L52.31,88.63L52.17,83.68L44.23,83.68L44.09,88.63L42.00,89.33L40.03,90.31L36.42,86.91L30.81,92.52L34.21,96.13L33.23,98.10L32.53,100.19L27.58,100.33L27.58,108.27L32.53,108.41L33.23,110.50L34.21,112.47L30.81,116.08L36.42,121.69L40.03,118.29L42.00,119.27L44.09,119.97L44.23,124.92L52.17,124.92L52.31,119.97L54.40,119.27L56.37,118.29L59.98,121.69L65.59,116.08L62.19,112.47L63.17,110.50L63.87,108.41L68.82,108.27L68.82,100.33L63.87,100.19L63.17,98.10L62.19,96.13L65.59,92.52L59.98,86.91L56.37,90.31ZM56.70,104.30A8.5,8.5 0 1,0 39.70,104.30A8.5,8.5 0 1,0 56.70,104.30Z"/>
<path fill="#5a7fb1" fill-rule="evenodd" d="M85.43,91.35L86.11,89.88L89.91,90.07L89.91,83.93L86.11,84.12L85.43,82.65L84.50,81.33L86.56,78.13L81.25,75.06L79.51,78.45L77.90,78.30L76.29,78.45L74.55,75.06L69.24,78.13L71.30,81.33L70.37,82.65L69.69,84.12L65.89,83.93L65.89,90.07L69.69,89.88L70.37,91.35L71.30,92.67L69.24,95.87L74.55,98.94L76.29,95.55L77.90,95.70L79.51,95.55L81.25,98.94L86.56,95.87L84.50,92.67ZM82.30,87.00A4.4,4.4 0 1,0 73.50,87.00A4.4,4.4 0 1,0 82.30,87.00Z"/>
<path fill="#5a7fb1" fill-rule="evenodd" d="M85.43,125.35L86.11,123.88L89.91,124.07L89.91,117.93L86.11,118.12L85.43,116.65L84.50,115.33L86.56,112.13L81.25,109.06L79.51,112.45L77.90,112.30L76.29,112.45L74.55,109.06L69.24,112.13L71.30,115.33L70.37,116.65L69.69,118.12L65.89,117.93L65.89,124.07L69.69,123.88L70.37,125.35L71.30,126.67L69.24,129.87L74.55,132.94L76.29,129.55L77.90,129.70L79.51,129.55L81.25,132.94L86.56,129.87L84.50,126.67ZM82.30,121.00A4.4,4.4 0 1,0 73.50,121.00A4.4,4.4 0 1,0 82.30,121.00Z"/>
</svg>
<div style="position:absolute;left:122px;top:81.3px;font-size:15px;line-height:20px;font-weight:normal;color:#262626;letter-spacing:0.45px;white-space:pre;-webkit-text-stroke:0.5px #262626">Дисковые квоты</div>
<div style="position:absolute;left:121px;top:104.2px;font-size:13px;line-height:20px;font-weight:normal;color:#262626;letter-spacing:0.32px;white-space:pre;-webkit-text-stroke:0.45px #262626">Настройка параметров дисковых квот для групп и пользователей системы</div>
<div style="position:absolute;left:6px;top:171px;width:788px;height:395px;box-sizing:border-box;border:1px solid #5c5c5c;background:#fff"></div>
<div style="position:absolute;left:26px;top:145px;width:123px;height:27px;box-sizing:border-box;border:1px solid #5c5c5c;background:#dcdcdc"></div>
<div style="position:absolute;left:241px;top:145px;width:54px;height:27px;box-sizing:border-box;border:1px solid #5c5c5c;background:#dcdcdc"></div>
<div style="position:absolute;left:294px;top:145px;width:63px;height:27px;box-sizing:border-box;border:1px solid #5c5c5c;background:#dcdcdc"></div>
<div style="position:absolute;left:148px;top:145px;width:94px;height:27px;box-sizing:border-box;border:1px solid #5c5c5c;border-bottom:none;background:#fff"></div>
<div style="position:absolute;left:32.5px;top:148px;font-size:12.6px;line-height:20px;font-weight:normal;color:#262626;letter-spacing:0px;white-space:pre;">Общая статистика</div>
<div style="position:absolute;left:153px;top:148px;font-size:12.6px;line-height:20px;font-weight:normal;color:#262626;letter-spacing:0.1px;white-space:pre;">Пользователи</div>
<div style="position:absolute;left:247.2px;top:148px;font-size:12.6px;line-height:20px;font-weight:normal;color:#262626;letter-spacing:0.1px;white-space:pre;">Группы</div>
<div style="position:absolute;left:300.3px;top:148px;font-size:12.6px;line-height:20px;font-weight:normal;color:#262626;letter-spacing:0.3px;white-space:pre;">Проекты</div>
<div style="position:absolute;left:14.5px;top:177.5px;font-size:12.4px;line-height:20px;font-weight:normal;color:#262626;letter-spacing:0px;white-space:pre;">Устройство:</div>
<div style="position:absolute;left:167px;top:176px;width:440px;height:24px;box-sizing:border-box;border:1px solid #444;border-radius:2px;background:#fff"></div>
<div style="position:absolute;left:587px;top:177px;width:19px;height:22px;box-sizing:border-box;border-left:1px solid #444;background:#dcdcdc"></div>
<svg style="position:absolute;left:587px;top:176px" width="20" height="24"><path d="M5.5,10 L14.5,10 L10,14.8Z" fill="#333"/></svg>
<div style="position:absolute;left:171px;top:177.5px;font-size:12.4px;line-height:20px;font-weight:normal;color:#262626;letter-spacing:0.9px;white-space:pre;">/dev/sda5</div>
<div style="position:absolute;left:267.3px;top:177.5px;font-size:12.4px;line-height:20px;font-weight:normal;color:#262626;letter-spacing:0.7px;white-space:pre;">/media/data</div>
<div style="position:absolute;left:362.3px;top:177.5px;font-size:12.4px;line-height:20px;font-weight:normal;color:#262626;letter-spacing:1.0px;white-space:pre;">ext4</div>
<div style="position:absolute;left:411.3px;top:177.5px;font-size:12.4px;line-height:20px;font-weight:normal;color:#262626;letter-spacing:0.4px;white-space:pre;">Data</div>
<div style="position:absolute;left:627px;top:176px;width:162px;height:62px;box-sizing:border-box;border:1px solid #111;background:#fff"></div>
<div style="position:absolute;left:627px;top:199px;width:162px;height:1px;box-sizing:border-box;background:#111"></div>
<div style="position:absolute;left:769px;top:177px;width:19px;height:22px;box-sizing:border-box;border-left:1px solid #111;background:#dcdcdc"></div>
<svg style="position:absolute;left:769px;top:176px" width="20" height="24"><path d="M5.9,9.8 L15,9.8 L10.45,14.9Z" fill="#111"/></svg>
<div style="position:absolute;left:631px;top:178px;font-size:12.4px;line-height:20px;font-weight:normal;color:#262626;letter-spacing:0.1px;white-space:pre;">Включено</div>
<div style="position:absolute;left:631px;top:199.5px;font-size:12.4px;line-height:20px;font-weight:normal;color:#262626;letter-spacing:-0.1px;white-space:pre;">Выключено</div>
<div style="position:absolute;left:631px;top:215.5px;font-size:12.4px;line-height:20px;font-weight:normal;color:#262626;letter-spacing:0.4px;white-space:pre;">Не задано</div>
<div style="position:absolute;left:14.75px;top:205.8px;font-size:12.3px;line-height:20px;font-weight:normal;color:#262626;letter-spacing:0px;white-space:pre;">Период отсрочки по превышению объёма:</div>
<div style="position:absolute;left:14.75px;top:239.5px;font-size:12.3px;line-height:20px;font-weight:normal;color:#262626;letter-spacing:0px;white-space:pre;">Период отсрочки по превышению файлов:</div>
<div style="position:absolute;left:275px;top:204px;width:45px;height:24px;box-sizing:border-box;border:1px solid #222;background:#fff"></div>
<div style="position:absolute;left:302px;top:205px;width:17px;height:22px;box-sizing:border-box;border-left:1px solid #222;background:#dcdcdc"></div>
<svg style="position:absolute;left:0;top:0;overflow:visible" width="1" height="1"><path d="M305.85,214.60 L316.15,214.60 L311.00,209.00Z M305.85,217.10 L316.15,217.10 L311.00,222.90Z" fill="#333"/></svg>
<div style="position:absolute;left:278.2px;top:205px;font-size:12.4px;line-height:20px;font-weight:normal;color:#262626;letter-spacing:0px;white-space:pre;width:20px;text-align:center">0</div>
<div style="position:absolute;left:393px;top:204px;width:41px;height:24px;box-sizing:border-box;border:1px solid #222;background:#fff"></div>
<div style="position:absolute;left:416px;top:205px;width:17px;height:22px;box-sizing:border-box;border-left:1px solid #222;background:#dcdcdc"></div>
<svg style="position:absolute;left:0;top:0;overflow:visible" width="1" height="1"><path d="M419.85,214.60 L430.15,214.60 L425.00,209.00Z M419.85,217.10 L430.15,217.10 L425.00,222.90Z" fill="#333"/></svg>
<div style="position:absolute;left:395.0px;top:205px;font-size:12.4px;line-height:20px;font-weight:normal;color:#262626;letter-spacing:0px;white-space:pre;width:20px;text-align:center">3</div>
<div style="position:absolute;left:510px;top:204px;width:45px;height:24px;box-sizing:border-box;border:1px solid #222;background:#fff"></div>
<div style="position:absolute;left:537px;top:205px;width:17px;height:22px;box-sizing:border-box;border-left:1px solid #222;background:#dcdcdc"></div>
<svg style="position:absolute;left:0;top:0;overflow:visible" width="1" height="1"><path d="M540.85,214.60 L551.15,214.60 L546.00,209.00Z M540.85,217.10 L551.15,217.10 L546.00,222.90Z" fill="#333"/></svg>
<div style="position:absolute;left:513.2px;top:205px;font-size:12.4px;line-height:20px;font-weight:normal;color:#262626;letter-spacing:0px;white-space:pre;width:20px;text-align:center">0</div>
<div style="position:absolute;left:327.6px;top:206px;font-size:12.4px;line-height:20px;font-weight:normal;color:#262626;letter-spacing:0px;white-space:pre;">недель</div>
<div style="position:absolute;left:445px;top:206px;font-size:12.4px;line-height:20px;font-weight:normal;color:#262626;letter-spacing:0px;white-space:pre;">дней</div>
<div style="position:absolute;left:562.5px;top:206px;font-size:12.4px;line-height:20px;font-weight:normal;color:#262626;letter-spacing:0px;white-space:pre;">часов</div>
<div style="position:absolute;left:275px;top:238px;width:45px;height:24px;box-sizing:border-box;border:1px solid #222;background:#fff"></div>
<div style="position:absolute;left:302px;top:239px;width:17px;height:22px;box-sizing:border-box;border-left:1px solid #222;background:#dcdcdc"></div>
<svg style="position:absolute;left:0;top:0;overflow:visible" width="1" height="1"><path d="M305.85,248.60 L316.15,248.60 L311.00,243.00Z M305.85,251.10 L316.15,251.10 L311.00,256.90Z" fill="#333"/></svg>
<div style="position:absolute;left:278.2px;top:239px;font-size:12.4px;line-height:20px;font-weight:normal;color:#262626;letter-spacing:0px;white-space:pre;width:20px;text-align:center">0</div>
<div style="position:absolute;left:393px;top:238px;width:41px;height:24px;box-sizing:border-box;border:1px solid #222;background:#fff"></div>
<div style="position:absolute;left:416px;top:239px;width:17px;height:22px;box-sizing:border-box;border-left:1px solid #222;background:#dcdcdc"></div>
<svg style="position:absolute;left:0;top:0;overflow:visible" width="1" height="1"><path d="M419.85,248.60 L430.15,248.60 L425.00,243.00Z M419.85,251.10 L430.15,251.10 L425.00,256.90Z" fill="#333"/></svg>
<div style="position:absolute;left:397.0px;top:239px;font-size:12.4px;line-height:20px;font-weight:normal;color:#262626;letter-spacing:0px;white-space:pre;width:20px;text-align:center">1</div>
<div style="position:absolute;left:510px;top:238px;width:45px;height:24px;box-sizing:border-box;border:1px solid #222;background:#fff"></div>
<div style="position:absolute;left:537px;top:239px;width:17px;height:22px;box-sizing:border-box;border-left:1px solid #222;background:#dcdcdc"></div>
<svg style="position:absolute;left:0;top:0;overflow:visible" width="1" height="1"><path d="M540.85,248.60 L551.15,248.60 L546.00,243.00Z M540.85,251.10 L551.15,251.10 L546.00,256.90Z" fill="#333"/></svg>
<div style="position:absolute;left:513.2px;top:239px;font-size:12.4px;line-height:20px;font-weight:normal;color:#262626;letter-spacing:0px;white-space:pre;width:20px;text-align:center">0</div>
<div style="position:absolute;left:327.6px;top:240px;font-size:12.4px;line-height:20px;font-weight:normal;color:#262626;letter-spacing:0px;white-space:pre;">недель</div>
<div style="position:absolute;left:445px;top:240px;font-size:12.4px;line-height:20px;font-weight:normal;color:#262626;letter-spacing:0px;white-space:pre;">дней</div>
<div style="position:absolute;left:562.5px;top:240px;font-size:12.4px;line-height:20px;font-weight:normal;color:#262626;letter-spacing:0px;white-space:pre;">часов</div>
<div style="position:absolute;left:627px;top:238px;width:45px;height:24px;box-sizing:border-box;border:1px solid #222;background:#fff"></div>
<div style="position:absolute;left:654px;top:239px;width:17px;height:22px;box-sizing:border-box;border-left:1px solid #222;background:#dcdcdc"></div>
<svg style="position:absolute;left:0;top:0;overflow:visible" width="1" height="1"><path d="M657.85,248.60 L668.15,248.60 L663.00,243.00Z M657.85,251.10 L668.15,251.10 L663.00,256.90Z" fill="#333"/></svg>
<div style="position:absolute;left:630.2px;top:239px;font-size:12.4px;line-height:20px;font-weight:normal;color:#262626;letter-spacing:0px;white-space:pre;width:20px;text-align:center">0</div>
<div style="position:absolute;left:678px;top:240px;font-size:12.2px;line-height:20px;font-weight:normal;color:#262626;letter-spacing:0px;white-space:pre;">минут</div>
<div style="position:absolute;left:12px;top:268px;width:776px;height:261px;box-sizing:border-box;border:1px solid #555;background:#fff"></div>
<div style="position:absolute;left:13px;top:269px;width:774px;height:63px;box-sizing:border-box;background:#cbcbcb"></div>
<div style="position:absolute;left:13px;top:332px;width:774px;height:30px;box-sizing:border-box;background:#93b8ef"></div>
<div style="position:absolute;left:13px;top:362px;width:774px;height:30px;box-sizing:border-box;background:#ffffff"></div>
<div style="position:absolute;left:13px;top:392px;width:774px;height:30px;box-sizing:border-box;background:#ededed"></div>
<div style="position:absolute;left:13px;top:422px;width:774px;height:30px;box-sizing:border-box;background:#ffffff"></div>
<div style="position:absolute;left:13px;top:452px;width:774px;height:30px;box-sizing:border-box;background:#ededed"></div>
<div style="position:absolute;left:13px;top:482px;width:774px;height:30px;box-sizing:border-box;background:#ffffff"></div>
<div style="position:absolute;left:13px;top:512px;width:774px;height:16px;box-sizing:border-box;background:#ededed"></div>
<div style="position:absolute;left:93px;top:269px;width:1px;height:259px;box-sizing:border-box;background:#555"></div>
<div style="position:absolute;left:140px;top:269px;width:1px;height:259px;box-sizing:border-box;background:#555"></div>
<div style="position:absolute;left:208px;top:269px;width:1px;height:259px;box-sizing:border-box;background:#555"></div>
<div style="position:absolute;left:293px;top:269px;width:1px;height:259px;box-sizing:border-box;background:#555"></div>
<div style="position:absolute;left:378px;top:269px;width:1px;height:259px;box-sizing:border-box;background:#555"></div>
<div style="position:absolute;left:461px;top:269px;width:1px;height:259px;box-sizing:border-box;background:#555"></div>
<div style="position:absolute;left:511px;top:269px;width:1px;height:259px;box-sizing:border-box;background:#555"></div>
<div style="position:absolute;left:596px;top:269px;width:1px;height:259px;box-sizing:border-box;background:#555"></div>
<div style="position:absolute;left:681px;top:269px;width:1px;height:259px;box-sizing:border-box;background:#555"></div>
<div style="position:absolute;left:19.3px;top:291.4px;font-size:12.4px;line-height:20px;font-weight:normal;color:#262626;letter-spacing:-0.1px;white-space:pre;">Имя</div>
<svg style="position:absolute;left:0;top:0;overflow:visible" width="1" height="1"><path d="M80.3,302.8 L88.7,302.8 L84.5,297.5Z" fill="#262626"/></svg>
<div style="position:absolute;left:97px;top:291.4px;font-size:12.4px;line-height:20px;font-weight:normal;color:#262626;letter-spacing:-0.1px;white-space:pre;"><span style="letter-spacing:0.6px">Квоты</span></div>
<div style="position:absolute;left:145px;top:291.4px;font-size:12.4px;line-height:20px;font-weight:normal;color:#262626;letter-spacing:-0.1px;white-space:pre;">Объём</div>
<div style="position:absolute;left:212.5px;top:275.79999999999995px;font-size:12.4px;line-height:20px;font-weight:normal;color:#262626;letter-spacing:-0.1px;white-space:pre;">Мягкое</div>
<div style="position:absolute;left:212.5px;top:291.4px;font-size:12.4px;line-height:20px;font-weight:normal;color:#262626;letter-spacing:-0.1px;white-space:pre;">ограничение</div>
<div style="position:absolute;left:212.5px;top:306.99999999999994px;font-size:12.4px;line-height:20px;font-weight:normal;color:#262626;letter-spacing:-0.1px;white-space:pre;">(объём)</div>
<div style="position:absolute;left:297.5px;top:275.79999999999995px;font-size:12.4px;line-height:20px;font-weight:normal;color:#262626;letter-spacing:-0.1px;white-space:pre;">Жёсткое</div>
<div style="position:absolute;left:297.5px;top:291.4px;font-size:12.4px;line-height:20px;font-weight:normal;color:#262626;letter-spacing:-0.1px;white-space:pre;">ограничение</div>
<div style="position:absolute;left:297.5px;top:306.99999999999994px;font-size:12.4px;line-height:20px;font-weight:normal;color:#262626;letter-spacing:-0.1px;white-space:pre;">(объём)</div>
<div style="position:absolute;left:382.5px;top:268.0px;font-size:12.4px;line-height:20px;font-weight:normal;color:#262626;letter-spacing:-0.1px;white-space:pre;">Отсрочка</div>
<div style="position:absolute;left:382.5px;top:283.6px;font-size:12.4px;line-height:20px;font-weight:normal;color:#262626;letter-spacing:-0.1px;white-space:pre;">жёсткого</div>
<div style="position:absolute;left:382.5px;top:299.2px;font-size:12.4px;line-height:20px;font-weight:normal;color:#262626;letter-spacing:-0.1px;white-space:pre;">ограничения</div>
<div style="position:absolute;left:382.5px;top:314.8px;font-size:12.4px;line-height:20px;font-weight:normal;color:#262626;letter-spacing:-0.1px;white-space:pre;">(объём)</div>
<div style="position:absolute;left:465.5px;top:291.4px;font-size:12.4px;line-height:20px;font-weight:normal;color:#262626;letter-spacing:-0.1px;white-space:pre;">Файлы</div>
<div style="position:absolute;left:515.3px;top:275.79999999999995px;font-size:12.4px;line-height:20px;font-weight:normal;color:#262626;letter-spacing:-0.1px;white-space:pre;">Мягкое</div>
<div style="position:absolute;left:515.3px;top:291.4px;font-size:12.4px;line-height:20px;font-weight:normal;color:#262626;letter-spacing:-0.1px;white-space:pre;">ограничение</div>
<div style="position:absolute;left:515.3px;top:306.99999999999994px;font-size:12.4px;line-height:20px;font-weight:normal;color:#262626;letter-spacing:-0.1px;white-space:pre;">(файлы)</div>
<div style="position:absolute;left:600.3px;top:275.79999999999995px;font-size:12.4px;line-height:20px;font-weight:normal;color:#262626;letter-spacing:-0.1px;white-space:pre;">Жёсткое</div>
<div style="position:absolute;left:600.3px;top:291.4px;font-size:12.4px;line-height:20px;font-weight:normal;color:#262626;letter-spacing:-0.1px;white-space:pre;">ограничение</div>
<div style="position:absolute;left:600.3px;top:306.99999999999994px;font-size:12.4px;line-height:20px;font-weight:normal;color:#262626;letter-spacing:-0.1px;white-space:pre;">(файлы)</div>
<div style="position:absolute;left:685.6px;top:268.0px;font-size:12.4px;line-height:20px;font-weight:normal;color:#262626;letter-spacing:-0.1px;white-space:pre;">Отсрочка</div>
<div style="position:absolute;left:685.6px;top:283.6px;font-size:12.4px;line-height:20px;font-weight:normal;color:#262626;letter-spacing:-0.1px;white-space:pre;">жёсткого</div>
<div style="position:absolute;left:685.6px;top:299.2px;font-size:12.4px;line-height:20px;font-weight:normal;color:#262626;letter-spacing:-0.1px;white-space:pre;">ограничения</div>
<div style="position:absolute;left:685.6px;top:314.8px;font-size:12.4px;line-height:20px;font-weight:normal;color:#262626;letter-spacing:-0.1px;white-space:pre;">(файлы)</div>
<div style="position:absolute;left:19.3px;top:337.8px;font-size:12.4px;line-height:20px;font-weight:normal;color:#1f5293;letter-spacing:0px;white-space:pre;text-decoration:underline;text-underline-offset:2px;text-decoration-skip-ink:none">user-1</div>
<div style="position:absolute;left:97.5px;top:337.8px;font-size:12.4px;line-height:20px;font-weight:normal;color:#262626;letter-spacing:0px;white-space:pre;">--</div>
<div style="position:absolute;left:212.5px;top:337.8px;font-size:12.4px;line-height:20px;font-weight:normal;color:#262626;letter-spacing:0px;white-space:pre;">1 Гб</div>
<div style="position:absolute;left:297.5px;top:337.8px;font-size:12.4px;line-height:20px;font-weight:normal;color:#262626;letter-spacing:0px;white-space:pre;">1100 Мб</div>
<div style="position:absolute;left:382.5px;top:337.8px;font-size:12.4px;line-height:20px;font-weight:normal;color:#262626;letter-spacing:0px;white-space:pre;">3д</div>
<div style="position:absolute;left:685.6px;top:337.8px;font-size:12.4px;line-height:20px;font-weight:normal;color:#262626;letter-spacing:0px;white-space:pre;">1д</div>
<div style="position:absolute;left:19.3px;top:367.5px;font-size:12.4px;line-height:20px;font-weight:normal;color:#1f5293;letter-spacing:0.25px;white-space:pre;text-decoration:underline;text-underline-offset:2px;text-decoration-skip-ink:none">superadmin</div>
<div style="position:absolute;left:97.5px;top:367.5px;font-size:12.4px;line-height:20px;font-weight:normal;color:#262626;letter-spacing:0px;white-space:pre;">--</div>
<div style="position:absolute;left:145px;top:367.5px;font-size:12.4px;line-height:20px;font-weight:normal;color:#262626;letter-spacing:0.4px;white-space:pre;">4.332 Мб</div>
<div style="position:absolute;left:772px;top:331px;width:16px;height:198px;box-sizing:border-box;border:1px solid #111;background:#fff"></div>
<svg style="position:absolute;left:0;top:0;overflow:visible" width="1" height="1"><path d="M775.9,338.8 L784,338.8 L779.95,334.9Z M776.4,521 L784,521 L780.2,524.6Z" fill="#262626"/><rect x="776" y="344.1" width="8" height="20.5" rx="4" fill="#303030"/></svg>
<div style="position:absolute;left:12px;top:535px;width:110px;height:24px;box-sizing:border-box;border:1px solid #6a6a6a;border-radius:2px;background:#dcdcdc"></div>
<svg style="position:absolute;left:0;top:0;overflow:visible" width="1" height="1"><path d="M33.2,541.3 L44.9,541.3 L44.9,542.4 L40.8,546.6 L40.8,553.6 L37.3,551.4 L37.3,546.6 L33.2,542.4 Z" fill="#303030"/></svg>
<div style="position:absolute;left:50.8px;top:536.5px;font-size:12.7px;line-height:20px;font-weight:normal;color:#262626;letter-spacing:-0.05px;white-space:pre;">Фильтры</div>
<div style="position:absolute;left:377px;top:535px;width:130px;height:24px;box-sizing:border-box;border:1px solid #6a6a6a;border-radius:2px;background:#dcdcdc"></div>
<svg style="position:absolute;left:0;top:0;overflow:visible" width="1" height="1"><path d="M412.6,543 L412.6,541.6 Q412.6,540.4 413.8,540.4 L416.8,540.4 Q418,540.4 418,541.6 L418,543 M409.3,543.3 L420.7,543.3 M410.7,543.3 L410.7,552 Q410.7,553.1 411.9,553.1 L418.5,553.1 Q419.7,553.1 419.7,552 L419.7,543.3" fill="none" stroke="#2a2a2a" stroke-width="1.3"/><path d="M412.9,545.6 V550.8 M417.5,545.6 V550.8" stroke="#2a2a2a" stroke-width="1"/><path d="M415.2,545.6 V550.8" stroke="#777" stroke-width="1"/></svg>
<div style="position:absolute;left:426.3px;top:536.5px;font-size:12.7px;line-height:20px;font-weight:normal;color:#262626;letter-spacing:-0.05px;white-space:pre;">Удалить</div>
<div style="position:absolute;left:518px;top:535px;width:130px;height:24px;box-sizing:border-box;border:1px solid #6a6a6a;border-radius:2px;background:#dcdcdc"></div>
<svg style="position:absolute;left:0;top:0;overflow:visible" width="1" height="1"><path d="M538.6,540.9 L530.8,540.9 Q528.9,540.9 528.9,542.8 L528.9,550.1 Q528.9,552 530.8,552 L538,552 Q540,552 540,550.1 L540,548.6" fill="none" stroke="#262626" stroke-width="1.3"/><path d="M541.7,540.3 L543.9,542.5 L536.4,550 L533.8,550.7 L534.3,548Z" fill="#262626"/></svg>
<div style="position:absolute;left:547px;top:536.5px;font-size:12.7px;line-height:20px;font-weight:normal;color:#262626;letter-spacing:-0.05px;white-space:pre;">Редактировать</div>
<div style="position:absolute;left:658px;top:535px;width:130px;height:24px;box-sizing:border-box;border:1px solid #6a6a6a;border-radius:2px;background:#dcdcdc"></div>
<svg style="position:absolute;left:0;top:0;overflow:visible" width="1" height="1"><rect x="687.6" y="540.9" width="10.6" height="11" rx="1.8" fill="none" stroke="#262626" stroke-width="1.3"/><path d="M692.9,541.6 L692.9,551.4 M688.3,546.4 L697.5,546.4" stroke="#262626" stroke-width="1.3"/></svg>
<div style="position:absolute;left:705px;top:536.5px;font-size:12.7px;line-height:20px;font-weight:normal;color:#262626;letter-spacing:-0.05px;white-space:pre;">Добавить</div>
<div style="position:absolute;left:1px;top:571px;width:798px;height:1px;box-sizing:border-box;background:#565656"></div>
<svg style="position:absolute;left:0;top:0;overflow:visible" width="1" height="1"><path d="M785.6,588.3 L793.8,580.4 M791.5,588.3 L794.8,585.2" stroke="#555" stroke-width="1.45"/></svg>
</body></html>
